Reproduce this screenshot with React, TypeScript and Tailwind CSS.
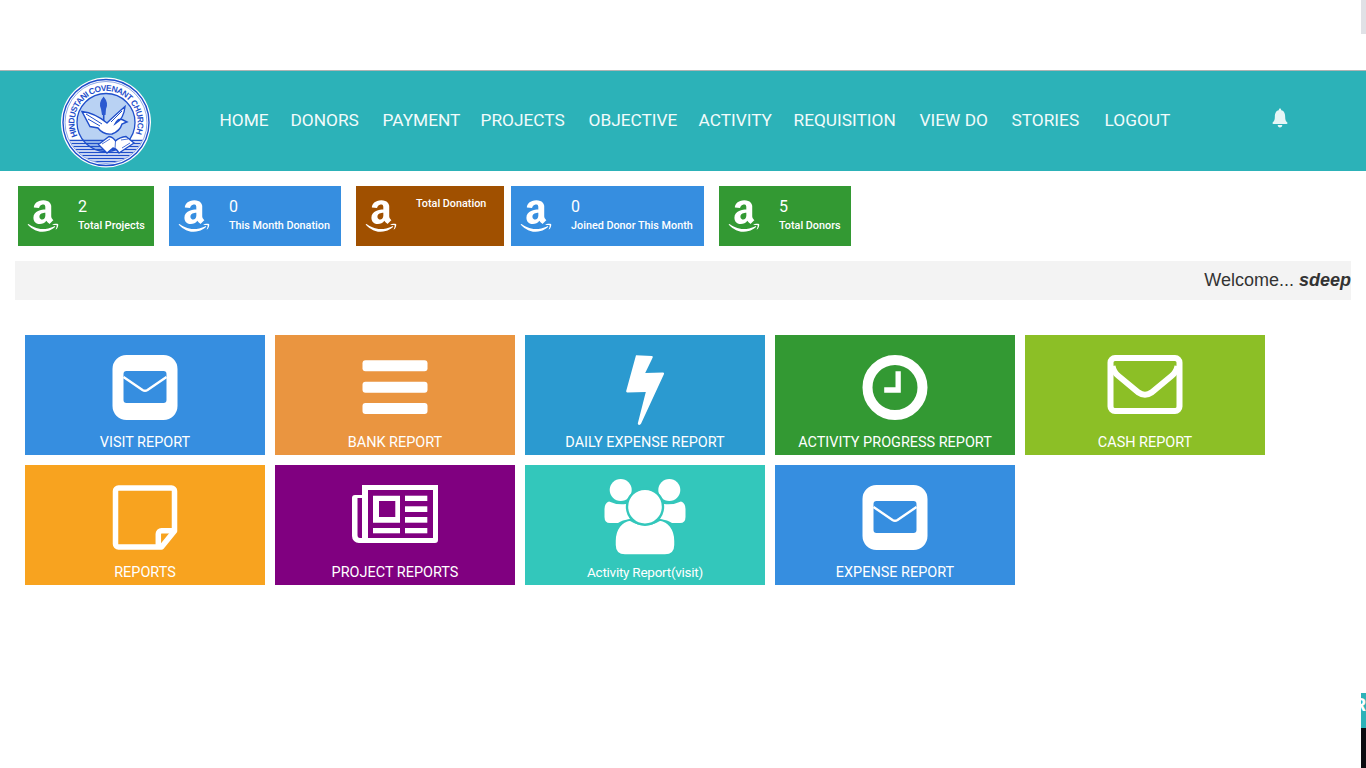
import { FaAmazon } from 'react-icons/fa';
import { IoIosNotifications } from 'react-icons/io';

const navItems = [
  { name: 'HOME', w: 'w-[71px]' },
  { name: 'DONORS', w: 'w-[92px]' },
  { name: 'PAYMENT', w: 'w-[98px]' },
  { name: 'PROJECTS', w: 'w-[108px]' },
  { name: 'OBJECTIVE', w: 'w-[110px]' },
  { name: 'ACTIVITY', w: 'w-[95px]' },
  { name: 'REQUISITION', w: 'w-[126px]' },
  { name: 'VIEW DO', w: 'w-[92px]' },
  { name: 'STORIES', w: 'w-[93px]' },
  { name: 'LOGOUT', w: 'w-[70px]' },
];

const MailFilled = () => (
  <g transform="translate(12.5,6)" fill="#fff">
    <path
      fillRule="evenodd"
      d="M14 0H51A14 14 0 0 1 65 14V51A14 14 0 0 1 51 65H14A14 14 0 0 1 0 51V14A14 14 0 0 1 14 0ZM14 16A3 3 0 0 0 11 19V45A3 3 0 0 0 14 48H51A3 3 0 0 0 54 45V19A3 3 0 0 0 51 16Z"
    />
    <path d="M11 22L30 35Q32.5 36.6 35 35L54 22" fill="none" stroke="#fff" strokeWidth="2.4" />
  </g>
);

const BarsIcon = () => (
  <g transform="translate(12.5,6)" fill="#fff">
    <rect x="0" y="5.3" width="65" height="11" rx="3" />
    <rect x="0" y="26.7" width="65" height="11" rx="3" />
    <rect x="0" y="48" width="65" height="11" rx="3" />
  </g>
);

const BoltIcon = () => (
  <g transform="translate(12.5,6)">
    <path
      d="M23.5 0.2L39.5 1Q40.6 1.2 40.2 2.4L32.7 18L50.6 17.4Q52 17.6 51.5 19L28.5 68.8Q27.5 70.4 26 69.8Q25 69.2 25.4 68L33.3 37L14.8 37.4Q13.4 37.4 13.7 36Z"
      fill="#fff"
    />
  </g>
);

const ClockIcon = () => (
  <g transform="translate(12.5,6)">
    <circle cx="32.5" cy="32.5" r="27.5" fill="none" stroke="#fff" strokeWidth="10" />
    <path d="M33 16.3H38.3V37.7H21.7V32.3H33Z" fill="#fff" />
  </g>
);

const MailOutline = () => (
  <g transform="translate(7.5,6)" fill="none" stroke="#fff" strokeWidth="6">
    <rect x="3" y="3" width="69" height="53" rx="4.5" />
    <path d="M5 11Q6 17 11 21L31 37.5Q37.5 42 44 37.5L64 21Q69 17 70 11" />
  </g>
);

const NoteIcon = () => (
  <g transform="translate(12.5,6)" fill="none" stroke="#fff" strokeWidth="5.5">
    <path d="M6 3H59A3 3 0 0 1 62 6V46L49 62H6A3 3 0 0 1 3 59V6A3 3 0 0 1 6 3Z" strokeLinejoin="round" />
    <path d="M45.8 62V49A3.3 3.3 0 0 1 49 45.7H62" />
  </g>
);

const NewsIcon = () => (
  <g transform="translate(2,6)" fill="#fff">
    <path
      fillRule="evenodd"
      d="M10 0H86V55A3 3 0 0 1 83 58H7A7 7 0 0 1 0 51V13A3 3 0 0 1 3 10H10ZM16 5V53H81V5ZM5.5 13V50Q5.5 53 8 53H10V13Z"
    />
    <path fillRule="evenodd" d="M21 10.7H48V37.7H21ZM27 16V32H43.3V16Z" />
    <rect x="53" y="10.7" width="22.3" height="5.3" />
    <rect x="53" y="21.3" width="22.3" height="5.7" />
    <rect x="53" y="32" width="22.3" height="5.7" />
    <rect x="21" y="43" width="27" height="5.3" />
    <rect x="53" y="43" width="22.3" height="5.3" />
  </g>
);

const GroupIcon = () => (
  <g fill="#fff">
    <circle cx="20.7" cy="11" r="11" />
    <circle cx="69.3" cy="11" r="11" />
    <path d="M9 22.5Q16 26 26 25L30 40Q22 41 18 44H10Q4.5 44 4.5 38V30Q4.5 24 9 22.5Z" />
    <path d="M81 22.5Q74 26 64 25L60 40Q68 41 72 44H80Q85.5 44 85.5 38V30Q85.5 24 81 22.5Z" />
    <path
      d="M15 62C15 50 22 42 30 41Q45 50 60 41C68 42 75 50 75 62V66Q75 76 65 76H25Q15 76 15 66Z"
      stroke="#33c7bb"
      strokeWidth="1.5"
    />
    <circle cx="45" cy="27.7" r="18" stroke="#33c7bb" strokeWidth="2.4" />
  </g>
);

const tiles = [
  { label: 'VISIT REPORT', bg: 'bg-[#368ee0]', text: 'mt-[4px] text-[14.45px]', icon: <MailFilled /> },
  { label: 'BANK REPORT', bg: 'bg-[#ea9540]', text: 'mt-[4px] text-[14.45px]', icon: <BarsIcon /> },
  { label: 'DAILY EXPENSE REPORT', bg: 'bg-[#2b9ad0]', text: 'mt-[4px] text-[14.45px]', icon: <BoltIcon /> },
  { label: 'ACTIVITY PROGRESS REPORT', bg: 'bg-[#339933]', text: 'mt-[4px] text-[14.45px]', icon: <ClockIcon /> },
  { label: 'CASH REPORT', bg: 'bg-[#8cbf26]', text: 'mt-[4px] text-[14.45px]', icon: <MailOutline /> },
  { label: 'REPORTS', bg: 'bg-[#f8a31f]', text: 'mt-[4px] text-[14.45px]', icon: <NoteIcon /> },
  { label: 'PROJECT REPORTS', bg: 'bg-[#800080]', text: 'mt-[4px] text-[14.45px]', icon: <NewsIcon /> },
  { label: 'Activity Report(visit)', bg: 'bg-[#33c7bb]', text: 'mt-[3px] text-[13.5px] tracking-[-0.25px]', icon: <GroupIcon /> },
  { label: 'EXPENSE REPORT', bg: 'bg-[#368ee0]', text: 'mt-[4px] text-[14.45px]', icon: <MailFilled /> },
];

function Logo() {
  const blue = '#1f4fcb';
  return (
    <svg width="90" height="92" viewBox="0 0 90 92" className="block">
      <defs>
        <path id="logo-arc" d="M16.5 58.9A31.5 31.5 0 1 1 73.5 58.9" />
        <clipPath id="logo-water">
          <circle cx="45" cy="45.5" r="40.5" />
        </clipPath>
      </defs>
      <circle cx="45" cy="45.5" r="45" fill="#fff" />
      <circle cx="45" cy="45.5" r="43" fill="none" stroke={blue} strokeWidth="1.4" />
      <circle cx="45" cy="45.5" r="41" fill="none" stroke={blue} strokeWidth="0.5" />
      <circle cx="45" cy="45.5" r="29" fill="#b9d2f3" stroke={blue} strokeWidth="1.3" />
      <text fontFamily='"Liberation Sans", sans-serif' fontSize="8.4" fontWeight="700" fill={blue}>
        <textPath href="#logo-arc" textLength="124" lengthAdjust="spacing">HINDUSTANI COVENANT CHURCH</textPath>
      </text>
      {/* water lines */}
      <g stroke={blue} strokeWidth="1.4" clipPath="url(#logo-water)">
        <path d="M5 63.5H85M5 66.5H85M5 69.5H85M5 72.5H85M5 75.5H85M5 78.5H85M5 81.5H85M5 84.5H85" />
      </g>
      {/* torch */}
      <path d="M42.6 19.5Q37 26 40 32L41 38H44.5L45 32Q48 26 42.6 19.5Z" fill="#2a59d0" />
      <path d="M42.7 38V48" stroke={blue} strokeWidth="1.6" />
      {/* dove */}
      <path
        d="M21 34.5Q34 36 46 46Q52 40 64 29.5Q63 42 54 47Q57 41 61 42.5L66 45L61 47Q59 54 51 57Q42 58 37 51L29 49.5Z"
        fill="#fff"
        stroke={blue}
        strokeWidth="1.4"
      />
      <path d="M25 37L41 47M27 42L39 49M50 45L61 34" stroke={blue} strokeWidth="1" fill="none" />
      {/* book */}
      <path d="M37.5 67.5L48 59.5Q52 60 54.5 64Q59 60 65 59.5L73 66L58 76Q56 72 52 71L46 76Z" fill="#fff" stroke={blue} strokeWidth="1.3" />
      <path d="M54.5 64L54 72M41 67L49 62M60 63L67 62M61 71L69 66" stroke={blue} strokeWidth="0.8" fill="none" />
    </svg>
  );
}

function StatCard({ bg, w, ml, value, label, top }: { bg: string; w: string; ml: string; value?: string; label: string; top?: boolean }) {
  return (
    <div className={`${bg} ${w} ${ml} h-[60px] flex text-white font-['Roboto',sans-serif]`}>
      <div className="w-[60px] shrink-0 pl-[7px] pt-[12px]">
        <FaAmazon size={36} />
      </div>
      {top ? (
        <div className="pt-[10px] text-[10.8px] leading-[15px] font-medium">{label}</div>
      ) : (
        <div>
          <div className="mt-[11px] text-[16px] leading-[20px]">{value}</div>
          <div className="mt-[1px] text-[10.8px] leading-[15px] font-medium whitespace-nowrap">{label}</div>
        </div>
      )}
    </div>
  );
}

export default function App() {
  return (
    <div className="relative w-[1366px] h-[768px] overflow-hidden bg-white">
      <div className="h-[70px]" />
      <header className="h-[101px] border-t border-[#aeb4b4] bg-[#2cb2b8] flex items-start font-['Roboto',sans-serif]">
        <div className="ml-[61px] mt-[6px] w-[90px] shrink-0">
          <Logo />
        </div>
        <nav className="ml-[68.5px] mt-[37px] flex">
          {navItems.map((item) => (
            <a key={item.name} className={`${item.w} text-[17.3px] leading-[24px] text-[#f2fbfb] whitespace-nowrap`}>
              {item.name}
            </a>
          ))}
        </nav>
        <div className="ml-auto mr-[74px] mt-[35px] text-[#e6f6f6]">
          <IoIosNotifications size={24} />
        </div>
      </header>

      <div className="mt-[15px] ml-[18px] flex">
        <StatCard bg="bg-[#339933]" w="w-[136px]" ml="" value="2" label="Total Projects" />
        <StatCard bg="bg-[#368ee0]" w="w-[172px]" ml="ml-[15px]" value="0" label="This Month Donation" />
        <StatCard bg="bg-[#a05000]" w="w-[148px]" ml="ml-[15px]" label="Total Donation" top />
        <StatCard bg="bg-[#368ee0]" w="w-[193px]" ml="ml-[7px]" value="0" label="Joined Donor This Month" />
        <StatCard bg="bg-[#339933]" w="w-[132px]" ml="ml-[15px]" value="5" label="Total Donors" />
      </div>

      <div className="mt-[15px] ml-[15px] w-[1336px] h-[39px] bg-[#f3f3f3] flex items-center justify-end text-[18px] text-[#333] font-['Liberation_Sans',sans-serif]">
        <span>
          Welcome... <b className="italic">sdeep</b>
        </span>
      </div>

      <div className="mt-[35px] ml-[25px] grid grid-cols-[repeat(5,240px)] gap-[10px]">
        {tiles.map((tile) => (
          <div key={tile.label} className={`${tile.bg} h-[120px] pt-[14px] flex flex-col items-center text-white font-['Roboto',sans-serif]`}>
            <svg width="90" height="80" viewBox="0 0 90 80" className="block overflow-visible">
              {tile.icon}
            </svg>
            <div className={`${tile.text} leading-[20px] whitespace-nowrap`}>{tile.label}</div>
          </div>
        ))}
      </div>

      {/* clipped widgets on the right edge */}
      <div className="absolute right-0 top-0 w-[5px] h-[34px] bg-[#e0e1e6]" />
      <div className="absolute right-0 top-[693px] w-[5px] h-[35px] bg-[#2cb2b8] overflow-hidden text-white font-bold text-[18px] leading-[24px] font-['Roboto',sans-serif]">
        <span className="absolute right-0 top-0">R</span>
      </div>
      <div className="absolute right-0 top-[728px] w-[5px] h-[40px] bg-[#0b0b10]" />
    </div>
  );
}
